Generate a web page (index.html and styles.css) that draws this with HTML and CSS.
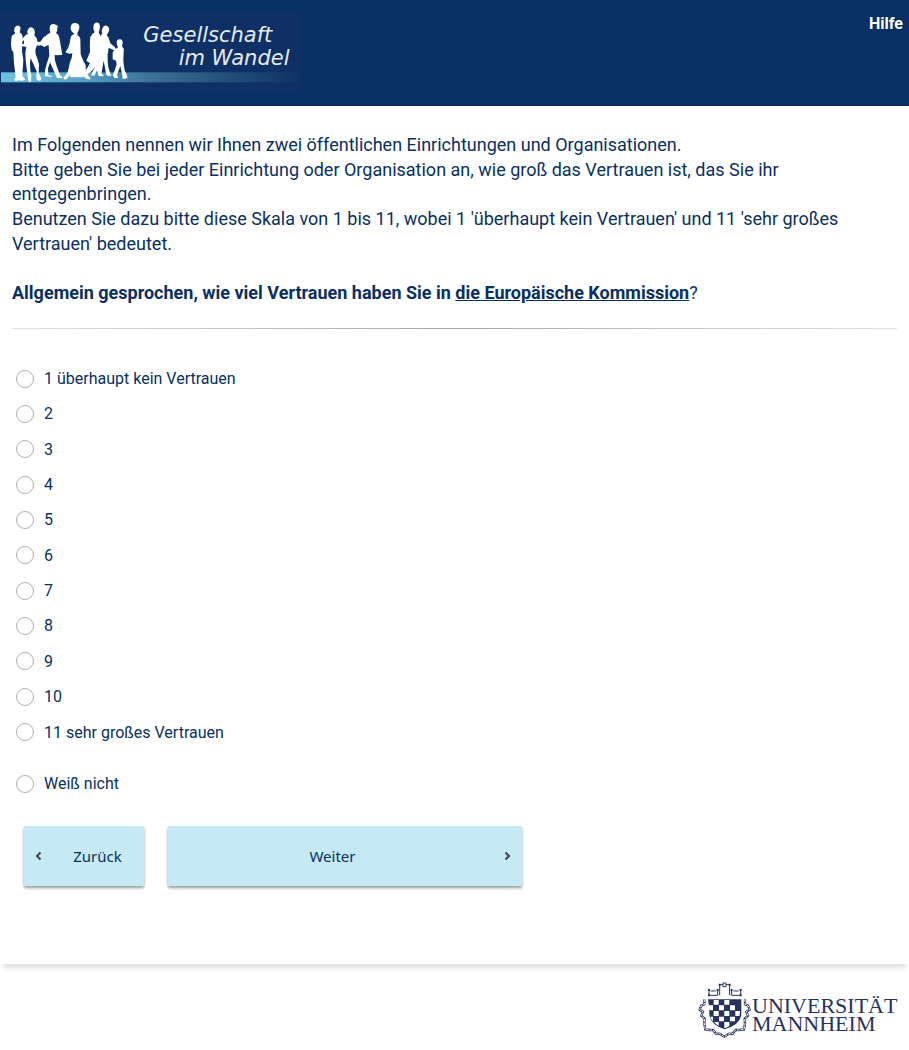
FILE: index.html
```html
<!DOCTYPE html>
<html lang="de">
<head>
<meta charset="utf-8">
<meta name="viewport" content="width=device-width, initial-scale=1">
<title>Gesellschaft im Wandel</title>
<link rel="stylesheet" href="styles.css">
</head>
<body>
<header class="header">
  <svg class="brand" viewBox="0 0 900 318" role="img" aria-label="Gesellschaft im Wandel">
    <defs>
      <linearGradient id="stripe">
        <stop offset="0" stop-color="#6cc3e0"/>
        <stop offset=".25" stop-color="#5aa5c6"/>
        <stop offset=".5" stop-color="#3c7196"/>
        <stop offset=".8" stop-color="#1f4a76"/>
        <stop offset="1" stop-color="#103164"/>
      </linearGradient>
    </defs>
    <rect y="36" width="900" height="242" fill="#0e3065"/>
    <rect x="3" y="217" width="897" height="30" fill="url(#stripe)"/>
    <g fill="#fff">
      <path d="M44 83q5-8 12-6q8 3 5 12l-2 8q8 4 9 13l-1 18l-1 26l4 26l-2 30l-1 18l8 8l-1 5l-13 1l-4-3l-3 3h-10l-1-4l4-7l-5-42l-2-33l-5-6q-4-18-1-32l1-10l11-8q-6-9-2-17z"/>
      <path d="M84 88q7-10 16-3q7 8 3 21q8 6 10 20l8-1l12-16l5 4l-12 20q-7 6-15 3l-5 13l1 14q6 13 10 30l-1 26l8 16l-3 7q-9 1-12-6l1-22l-18-40q-4 18-1 36l3 19l-1 16q-7 3-9-4l-2-20l-5-40l-1-22l3-18l-15-3l-2-4l10-3v-10l-8 4l-2-3l13-15q3-4 9-5q-4-7 0-14z"/>
      <path d="M149 86q0-14 11-14l10 3l5 5l-3 2q1 12-4 17q8 4 10 14l9 51l-13 2l-10-1q-1 14 4 27l12 34q9 5 7 9l-16-1l-11-25l-10-22l-6 18l1 20q11 3 12 6l-22-2q-2-20 6-40l7-22l-2-31q-5-1-12 5l-13-6l11-22q7-11 19-15q-2-4-2-12z"/>
      <path d="M212 81q2-13 14-12q14 2 12 15q-1 8-5 13l-1 8q8 4 9 12l1 46l8 20l7 12l1 33h-9q4 4-4 4h-34v-8l-7 8q-2 8-12 6l-2-5l12-14q5-15 7-30l6-15l2-14l-9 1l-12-4q10-11 12-24l5-24q4-5 10-8q-10-5-11-16z"/>
      <path d="M281 74q7-11 16-4q4 5 2 18l-3 9l5 10l2 18l3 36l-5 22l-29 33l-10 7l9 11q2 5-4 4q-12-1-16-8l1-10l18-30l-11-8l11-26q-1-30 1-45q3-9 13-14q-6-11-3-23z"/>
      <path d="M306 89q4-14 14-12q11 4 6 18l-6 11q8 6 8 14l3 10l14 12l5 10l-8-1l-16-8l-3 21q-1 21 2 38l7 21l4 2l-8 4l-9-4l-8-43l-7 40l7 2l-2 5l-13-1l-5-16l-9 16l-9-3q7-14 18-38l2-30l6-42q1-10 9-15q-5-4-2-11z"/>
      <path d="M350 126q1-9 10-8q8 1 8 10l-2 11q7 6 5 15l-1 27q1 14 4 30l9 21l-6 4h-9l-2-15l-5-23l-10 27l4 9h-11l-6-8q8-17 12-33l-2-11l-10-4v-15q-1-9 6-14l10-7q-4-6-4-16z"/>
    </g>
    <g class="brand-text">
      <text x="430" y="127">Gesellschaft</text>
      <text x="536" y="196">im Wandel</text>
    </g>
  </svg>
  <a class="help" href="#">Hilfe</a>
</header>

<main class="card">
  <form class="survey">
    <div class="question" id="question">
      <p>Im Folgenden nennen wir Ihnen zwei öffentlichen Einrichtungen und Organisationen.<br>
      Bitte geben Sie bei jeder Einrichtung oder Organisation an, wie groß das Vertrauen ist, das Sie ihr entgegenbringen.<br>
      Benutzen Sie dazu bitte diese Skala von 1 bis 11, wobei 1 'überhaupt kein Vertrauen' und 11 'sehr großes Vertrauen' bedeutet.</p>
      <p><strong>Allgemein gesprochen, wie viel Vertrauen haben Sie in <u>die Europäische Kommission</u></strong>?</p>
    </div>
    <hr class="divider">
    <div class="options" role="radiogroup" aria-labelledby="question">
      <label class="option"><input type="radio" name="trust" value="1">1 überhaupt kein Vertrauen</label>
      <label class="option"><input type="radio" name="trust" value="2">2</label>
      <label class="option"><input type="radio" name="trust" value="3">3</label>
      <label class="option"><input type="radio" name="trust" value="4">4</label>
      <label class="option"><input type="radio" name="trust" value="5">5</label>
      <label class="option"><input type="radio" name="trust" value="6">6</label>
      <label class="option"><input type="radio" name="trust" value="7">7</label>
      <label class="option"><input type="radio" name="trust" value="8">8</label>
      <label class="option"><input type="radio" name="trust" value="9">9</label>
      <label class="option"><input type="radio" name="trust" value="10">10</label>
      <label class="option"><input type="radio" name="trust" value="11">11 sehr großes Vertrauen</label>
      <label class="option option-apart"><input type="radio" name="trust" value="98">Weiß nicht</label>
    </div>
    <div class="actions">
      <button class="button back" type="button">
        <svg class="chevron" viewBox="0 0 7 10" aria-hidden="true"><path d="M5.500 1.500 2 5l3.500 3.500"/></svg>
        <span>Zurück</span>
      </button>
      <button class="button next" type="submit">
        <span>Weiter</span>
        <svg class="chevron" viewBox="0 0 7 10" aria-hidden="true"><path d="M1.500 1.500 5 5 1.500 8.500"/></svg>
      </button>
    </div>
  </form>
</main>

<footer class="footer">
  <svg class="university" viewBox="0 0 200 60" role="img" aria-label="Universität Mannheim">
    <g transform="translate(-8 -10) scale(.33333)">
      <g fill="none" stroke="#27335f">
        <g stroke-width="3">
          <path d="M57 59v17h26V59M62 63h15M125 59v17h27V59M131 63h15"/>
          <path d="M89 76V44h10M108 44h11v32M99 39h9v11h-9z"/>
        </g>
        <path stroke-width="7" d="M43 88v15l-9 4-5 12 10 6-5 12 10 9-1 15 3 17 15 2 8 0 10 12 10-1 14 9 14-9 10 1 10-12h8l17-2 3-17-1-15 10-9-5-12 10-6-5-12-9-4V88"/>
        <path stroke="#fff" stroke-width="3" stroke-dasharray="8 3" d="M43 88v15l-9 4-5 12 10 6-5 12 10 9-1 15 3 17 15 2 8 0 10 12 10-1 14 9 14-9 10 1 10-12h8l17-2 3-17-1-15 10-9-5-12 10-6-5-12-9-4V88"/>
      </g>
      <g fill="#27335f">
        <path d="M54 57h6v6h-6zM80 57h6v6h-6zM122 57h6v6h-6zM149 57h6v6h-6zM86 41h6v6h-6zM116 41h6v6h-6zM54 73h6v6h-6zM149 73h6v6h-6z"/>
        <path d="M54 88h100v42q0 33-50 48q-46-15-46-48q0-20-4-42z"/>
      </g>
      <path fill="#fff" d="M71 90h15v14H71zM103 90h15v14h-15zM56 106h13v15H58zM87 106h15v15H87zM120 106h15v15h-15zM71 123h15v15H71zM103 123h15v15h-15zM136 123h14q0 9-2 15h-12zM61 140h8v14q-6-6-8-14zM87 140h15v14H87zM120 140h15v14h-15zM72 156h14v11q-9-4-14-11zM103 156h15v12q-8 5-15 7z"/>
    </g>
    <g class="university-text">
      <text x="54" y="33">UNIVERSITÄT</text>
      <text x="54" y="51">MANNHEIM</text>
    </g>
  </svg>
</footer>
</body>
</html>
```
FILE: styles.css
```css
* {
  box-sizing: border-box;
}

body {
  margin: 0;
  background: #fff;
  color: #083064;
  font-family: Roboto, "Liberation Sans", sans-serif;
  font-size: 16px;
}

.header {
  display: flex;
  justify-content: space-between;
  align-items: flex-start;
  background: #083064;
}

.brand {
  display: block;
  width: 300px;
  height: 106px;
}

.brand-text {
  fill: #e6ebf3;
  font-family: "DejaVu Sans", sans-serif;
  font-size: 63px;
  font-style: italic;
}

.help {
  padding: 14px 6px;
  color: #fff;
  font-weight: 700;
  line-height: 19px;
  text-decoration: none;
}

.card {
  padding: 27px 12px 78px;
  background: #fff;
  box-shadow: 0 7px 5px -3px rgba(0, 0, 0, 0.12);
}

.question {
  display: grid;
  gap: 25px;
  font-size: 18px;
  line-height: 1.37;
}

.question p {
  margin: 0;
}

.divider {
  height: 1px;
  margin: 22px 0 32px;
  border: 0;
  background: linear-gradient(to right, #e2e2e2, #a8a8a8, #e2e2e2);
}

.options {
  display: flex;
  flex-direction: column;
  align-items: flex-start;
}

.option {
  display: flex;
  align-items: center;
  gap: 10px;
  padding: 8px 4px;
  line-height: 1.21;
}

.option-apart {
  margin-top: 16px;
}

.option input {
  appearance: none;
  width: 18px;
  height: 18px;
  margin: 0;
  border: 1px solid #b0b0b0;
  border-radius: 50%;
  background: #fff;
}

.option input:checked {
  border: 5px solid #083064;
}

.actions {
  display: flex;
  gap: 24px;
  max-width: 510px;
  margin-top: 25px;
  padding-left: 12px;
}

.button {
  display: flex;
  align-items: center;
  height: 60px;
  padding: 0;
  border: 0;
  border-radius: 1px;
  background: #c5e9f5;
  box-shadow: 0 2px 3px rgba(0, 0, 0, 0.4);
  color: #083064;
  font-family: "Noto Sans", sans-serif;
  font-size: 15px;
}

.button span {
  flex: 1;
  text-align: center;
}

.back {
  width: 120px;
  padding-left: 11px;
  gap: 9px;
}

.next {
  flex: 1;
  padding-right: 11px;
  gap: 7px;
}

.chevron {
  width: 7px;
  height: 10px;
  fill: none;
  stroke: #444;
  stroke-width: 2;
}

.footer {
  display: flex;
  justify-content: flex-end;
  padding: 16px 11px 10px;
}

.university {
  width: 200px;
  height: 60px;
}

.university-text {
  fill: #27335f;
  font-family: "Liberation Serif", serif;
  font-size: 22px;
}
```
